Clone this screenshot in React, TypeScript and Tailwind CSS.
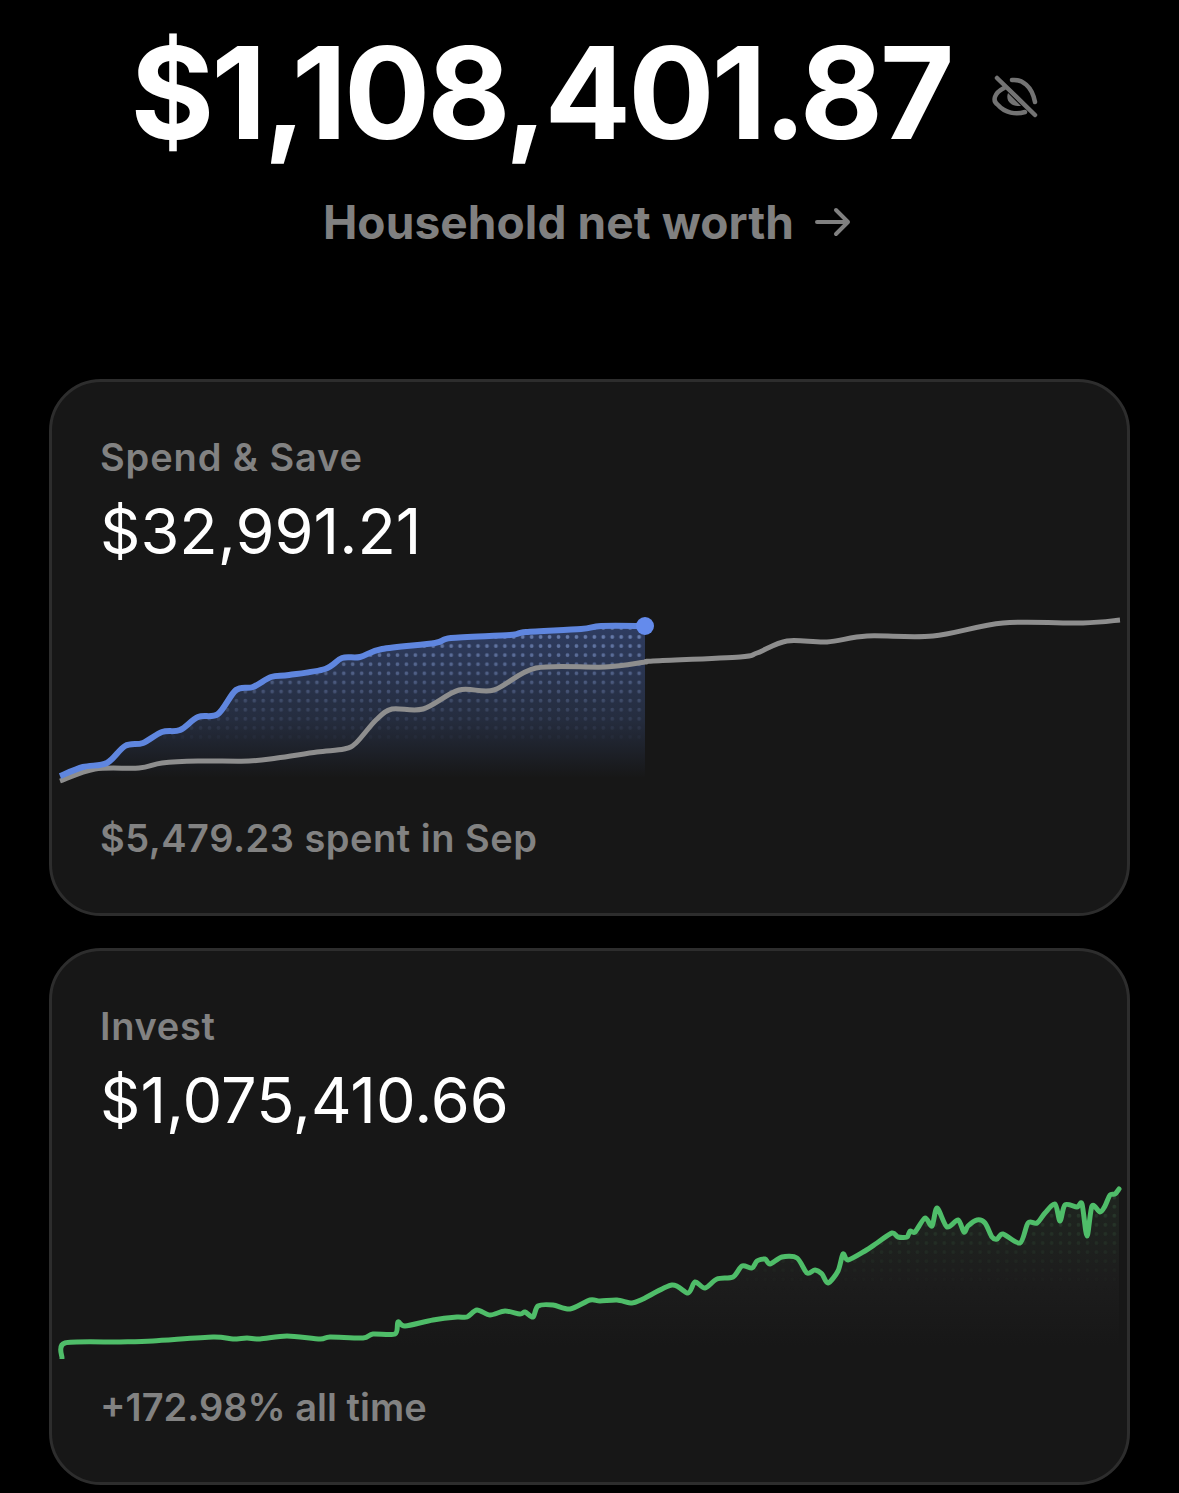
import React from "react";

type P = [number, number];

const blue: P[] = [[60,776],[83,767],[107,763],[125,746],[143,743],[162,732],[180,730],[198,717],[218,714],[236,690],[253,687],[271,677],[289,675],[325,669],[342,658],[360,657],[382,649],[435,643],[451,638],[510,635],[526,632],[581,629],[601,626],[645,626]];
const grey: P[] = [[60,781],[95,769],[139,768],[162,763],[198,761],[249,761],[277,758],[317,752],[344,749],[356,743],[376,720],[392,709],[423,709],[459,690],[494,690],[536,668],[605,667],[645,662],[653,661],[740,657],[757,653],[787,641],[827,642],[867,636],[933,636],[1003,623],[1083,623],[1120,620]];
const green: P[] = [[62,1357],[65,1342],[120,1341],[153,1340],[213,1336],[233,1338],[247,1337],[260,1338],[287,1335],[320,1338],[330,1336],[363,1337],[373,1333],[395,1333],[398,1321],[405,1325],[433,1319],[457,1316],[467,1316],[477,1309],[490,1314],[505,1310],[520,1313],[525,1311],[533,1316],[538,1305],[553,1304],[570,1308],[590,1299],[600,1300],[617,1299],[632,1302],[643,1298],[672,1284],[688,1292],[695,1281],[705,1287],[717,1278],[733,1276],[742,1265],[752,1267],[757,1260],[765,1258],[770,1263],[782,1256],[797,1257],[807,1272],[815,1269],[822,1273],[828,1282],[838,1270],[843,1253],[848,1259],[865,1250],[877,1242],[892,1232],[898,1236],[907,1236],[910,1230],[915,1231],[925,1217],[932,1225],[937,1207],[947,1226],[958,1219],[964,1231],[968,1225],[977,1219],[985,1222],[992,1236],[997,1238],[1003,1233],[1020,1242],[1028,1222],[1037,1222],[1045,1212],[1055,1203],[1060,1220],[1065,1204],[1077,1206],[1082,1203],[1087,1235],[1092,1205],[1100,1211],[1105,1205],[1110,1194],[1115,1193],[1119,1188]];

function smooth(pts: P[], t = 0.16) {
  let d = `M${pts[0][0]} ${pts[0][1]}`;
  for (let i = 0; i < pts.length - 1; i++) {
    const p0 = pts[Math.max(i - 1, 0)];
    const p1 = pts[i];
    const p2 = pts[i + 1];
    const p3 = pts[Math.min(i + 2, pts.length - 1)];
    d += ` C${p1[0] + (p2[0] - p0[0]) * t} ${p1[1] + (p2[1] - p0[1]) * t} ${p2[0] - (p3[0] - p1[0]) * t} ${p2[1] - (p3[1] - p1[1]) * t} ${p2[0]} ${p2[1]}`;
  }
  return d;
}

function SpendChart() {
  const line = smooth(blue);
  return (
    <svg viewBox="52 600 1075 190" className="ml-[-48px] block h-[190px] w-[1075px] shrink-0" fill="none">
      <defs>
        <pattern id="bd" x="527.2" y="632.5" width="8.95" height="9.1" patternUnits="userSpaceOnUse">
          <circle cx="4.5" cy="4.5" r="1.9" fill="#9db8f5" />
        </pattern>
        <linearGradient id="bg1" gradientUnits="userSpaceOnUse" x1="0" y1="626" x2="0" y2="778">
          <stop offset="0" stopColor="#4f70c8" stopOpacity="0.42" />
          <stop offset="0.6" stopColor="#4a66a8" stopOpacity="0.28" />
          <stop offset="1" stopColor="#4a66a8" stopOpacity="0" />
        </linearGradient>
        <linearGradient id="bg2" gradientUnits="userSpaceOnUse" x1="0" y1="626" x2="0" y2="745">
          <stop offset="0" stopColor="#fff" stopOpacity="0.55" />
          <stop offset="1" stopColor="#fff" stopOpacity="0" />
        </linearGradient>
        <mask id="bm" maskUnits="userSpaceOnUse" x="52" y="600" width="1075" height="190">
          <rect x="52" y="600" width="1075" height="190" fill="url(#bg2)" />
        </mask>
      </defs>
      <path d={`${line} L645 778 L60 778 Z`} fill="url(#bg1)" />
      <path d={`${line} L645 778 L60 778 Z`} fill="url(#bd)" mask="url(#bm)" />
      <path d={smooth(grey)} stroke="#8e8e8e" strokeWidth="5" strokeLinecap="butt" />
      <path d={line} stroke="#5f86df" strokeWidth="6" strokeLinecap="butt" />
      <circle cx="645" cy="626" r="9" fill="#648bec" />
    </svg>
  );
}

function InvestChart() {
  const line = smooth(green, 0.14);
  return (
    <svg viewBox="52 1168 1075 190" className="ml-[-48px] block h-[190px] w-[1075px] shrink-0" fill="none">
      <defs>
        <pattern id="gd" x="0" y="0" width="8.95" height="9.1" patternUnits="userSpaceOnUse">
          <circle cx="4.5" cy="4.5" r="1.9" fill="#4c8a58" />
        </pattern>
        <linearGradient id="gg1" gradientUnits="userSpaceOnUse" x1="0" y1="1190" x2="0" y2="1345">
          <stop offset="0" stopColor="#3c5a40" stopOpacity="0.2" />
          <stop offset="0.55" stopColor="#2a2a2a" stopOpacity="0.3" />
          <stop offset="1" stopColor="#2a2a2a" stopOpacity="0" />
        </linearGradient>
        <linearGradient id="gg2" gradientUnits="userSpaceOnUse" x1="0" y1="1190" x2="0" y2="1290">
          <stop offset="0" stopColor="#fff" stopOpacity="0.25" />
          <stop offset="1" stopColor="#fff" stopOpacity="0" />
        </linearGradient>
        <mask id="gm" maskUnits="userSpaceOnUse" x="52" y="1168" width="1075" height="190">
          <rect x="52" y="1168" width="1075" height="190" fill="url(#gg2)" />
        </mask>
      </defs>
      <path d={`${line} L1119 1352 L62 1352 Z`} fill="url(#gg1)" />
      <path d={`${line} L1119 1352 L62 1352 Z`} fill="url(#gd)" mask="url(#gm)" />
      <path d={line} stroke="#4fbd69" strokeWidth="5" strokeLinejoin="round" strokeLinecap="round" />
    </svg>
  );
}

function Card({ label, amount, foot, labelClass, footClass, children }: { label: string; amount: string; foot: string; labelClass: string; footClass: string; children: React.ReactNode }) {
  return (
    <section className="flex h-[537px] w-[1081px] flex-col rounded-[52px] border-[3px] border-[#2d2d2d] bg-[#171717] pl-[48px] pt-[53px]">
      <div className={`h-[44px] text-[38px] font-semibold leading-[44px] text-[#828282] ${labelClass}`}>{label}</div>
      <div className="mt-[19px] h-[66px] text-[63px] font-normal leading-[66px] text-white">{amount}</div>
      <div className="mt-[36px]">{children}</div>
      <div className={`mt-[26px] h-[44px] text-[38px] font-semibold leading-[44px] text-[#828282] ${footClass}`}>{foot}</div>
    </section>
  );
}

export default function App() {
  return (
    <div className="h-[1493px] w-[1179px] overflow-hidden bg-black font-['Inter',sans-serif]">
      <header className="h-[379px] w-full">
        <div className="flex items-center justify-center gap-[40px] pr-[9px] pt-[18px]">
          <h1 className="text-[128px] font-bold leading-[150px] tracking-[-3px] text-white">$1,108,401.87</h1>
          <svg viewBox="0 0 48 46" className="mt-[7px] h-[46px] w-[48px] shrink-0" fill="none" stroke="#737373" strokeWidth="4.5" strokeLinecap="round">
            <path d="M5 4 L43 41" />
            <path d="M20 6 C30 5 40 12 43 28" />
            <path d="M12 14 C2 19 0 27 6 31 C13 39 24 41 33 38" />
            <path d="M16 19 C13 27 20 33 29 32 Z" fill="#737373" stroke="none" />
          </svg>
        </div>
        <div className="mt-[26px] flex items-center justify-center gap-[21px] pr-[5px]">
          <span className="text-[46px] font-bold leading-[56px] tracking-[0.1px] text-[#808080]">Household net worth</span>
          <svg viewBox="0 0 36 30" className="h-[30px] w-[36px]" fill="none" stroke="#808080" strokeWidth="4" strokeLinecap="round" strokeLinejoin="round">
            <path d="M2 15 H33 M21 3 L33 15 L21 27" />
          </svg>
        </div>
      </header>
      <main className="flex flex-col items-center gap-[32px]">
        <Card label="Spend & Save" amount="$32,991.21" foot="$5,479.23 spent in Sep" labelClass="tracking-[0.9px]" footClass="tracking-[0.5px]">
          <SpendChart />
        </Card>
        <Card label="Invest" amount="$1,075,410.66" foot="+172.98% all time" labelClass="tracking-[0.7px]" footClass="tracking-[0px]">
          <InvestChart />
        </Card>
      </main>
    </div>
  );
}
